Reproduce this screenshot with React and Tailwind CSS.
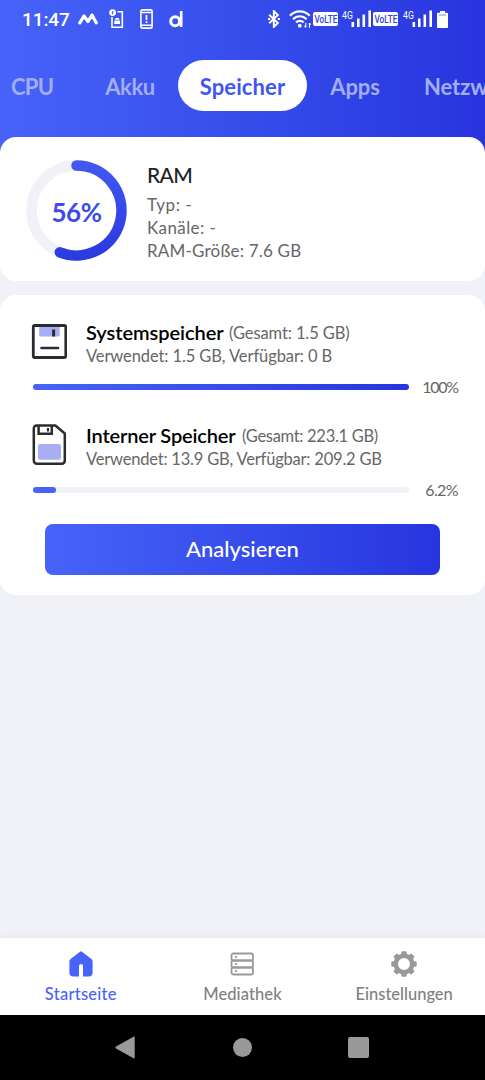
import React from "react";
import clsx from "clsx";

const VolteBadge = () => (
  <svg className="h-[14px] w-[25px]" viewBox="0 0 25 14">
    <rect width="25" height="14" rx="2" fill="#fff" />
    <text
      transform="translate(1.4 11.3) scale(0.7 1)"
      fontSize="11.8"
      fill="#3244e5"
      className="font-['Roboto',sans-serif] font-medium"
    >
      VoLTE
    </text>
  </svg>
);

const Signal = () => (
  <svg className="h-[18px] w-[30px]" viewBox="0 0 30 18" fill="#fff">
    <text
      transform="translate(0 9.3) scale(0.76 1)"
      fontSize="11.5"
      className="font-['Roboto',sans-serif]"
    >
      4G
    </text>
    <rect x="9.5" y="12" width="2.6" height="5" />
    <rect x="15" y="8.5" width="2.6" height="8.5" />
    <rect x="20.5" y="4.5" width="2.6" height="12.5" />
    <rect x="26.4" y="0.5" width="2.6" height="16.5" />
  </svg>
);

const StatusBar = () => (
  <div className="flex h-[38px] items-center pl-[22px] text-white">
    <span className="w-[56px] pt-px font-['Roboto',sans-serif] text-[19px] leading-none font-medium tracking-[-0.1px]">
      11:47
    </span>
    <svg className="h-3 w-5" viewBox="0 0 20 12" fill="none" stroke="#fff" strokeWidth="3.2" strokeLinecap="round" strokeLinejoin="round">
      <path d="M1.8 9.8 6 3l4 5.5L14 2l4.2 7.8" />
    </svg>
    <svg className="ml-[11px] h-5 w-[15px]" viewBox="0 0 15 20" fill="none" stroke="#fff" strokeWidth="1.6">
      <path d="M8.5 2.8h4.8v15.5H3V8" />
      <circle cx="3.6" cy="3.6" r="3.4" fill="#fff" stroke="none" />
      <path d="M4.2 2 3.2 5.3" stroke="#3f55f0" strokeWidth="1.1" />
      <path d="M5.3 11.6H11V15H5.3zM6.6 9h3.1l.8 1.8H5.8z" fill="#fff" stroke="none" />
    </svg>
    <svg className="ml-4 h-5 w-[13px]" viewBox="0 0 13 20" fill="none" stroke="#fff" strokeWidth="1.6">
      <rect x="0.9" y="0.9" width="11.2" height="18.2" rx="1.4" />
      <path d="M1 3.6h11M1 16.2h11" strokeWidth="1.5" />
      <path d="M6.5 6v5M6.5 12.2V14" strokeWidth="1.7" />
    </svg>
    <svg className="ml-4 h-[18px] w-[15px]" viewBox="0 0 15 18" fill="none" stroke="#fff" strokeWidth="3">
      <circle cx="6.2" cy="11.2" r="4.5" />
      <path d="M12.2 1v16" strokeWidth="2.6" />
    </svg>
    <svg className="ml-[84px] h-[18px] w-3" viewBox="0 0 12 18" fill="none" stroke="#fff" strokeWidth="1.9">
      <path d="m1.2 4.7 8.7 8.3-4.1 4V1l4.1 4-8.7 8.3" />
      <path d="M0 9h2.2M9.8 9H12" strokeWidth="2" />
    </svg>
    <svg className="ml-[9px] h-[18px] w-[23px]" viewBox="0 0 23 18" fill="none" stroke="#fff" strokeWidth="2.2">
      <path d="M.9 5.8C6.2-.2 15.4-.2 20.7 5.8M4 9.3c3.8-4.1 9.8-4.1 13.6 0M7 12.5c2.2-2.3 5.4-2.3 7.6 0" />
      <circle cx="10.8" cy="15.7" r="1.9" fill="#fff" stroke="none" />
      <path d="M16.8 12.8v4.7m-1.3-1.6 1.3 1.5M20.4 17.8v-4.7m1.3 1.6-1.3-1.5" strokeWidth="1.1" />
    </svg>
    <div className="ml-px flex items-center">
      <VolteBadge />
      <div className="ml-1"><Signal /></div>
      <div className="ml-px"><VolteBadge /></div>
      <div className="ml-[5px]"><Signal /></div>
    </div>
    <svg className="ml-1 h-[17px] w-[11px]" viewBox="0 0 11 17" fill="#fff">
      <path d="M3 0h5v1.8h2.2c.5 0 .8.3.8.8V16c0 .6-.4 1-1 1H1c-.6 0-1-.4-1-1V2.6c0-.5.3-.8.8-.8H3z" />
      <path d="M2 4h7" stroke="#6a76ef" strokeWidth="0.9" />
    </svg>
  </div>
);

const tabs = [
  { label: "CPU", style: "ml-[11px] w-[42px] tracking-[-0.7px]" },
  { label: "Akku", style: "ml-[52px] w-[50px] tracking-[-0.4px]" },
  { label: "Speicher", active: true, style: "ml-[23px] w-[129px] tracking-[0.1px]" },
  { label: "Apps", style: "ml-[23px] w-[50px] tracking-[-0.1px]" },
  { label: "Netzwerk", style: "ml-[44px] tracking-[-0.1px]" },
];

const TabBar = () => (
  <nav className="mt-[22px] flex h-[51px] overflow-hidden">
    {tabs.map((tab) => (
      <button
        key={tab.label}
        className={clsx(
          "h-[51px] shrink-0 rounded-full pt-0.5 text-center text-[22px] leading-[49px] font-bold whitespace-nowrap",
          tab.active ? "bg-white text-[#3f57f1]" : "text-[#a3adf8]",
          tab.style
        )}
      >
        {tab.label}
      </button>
    ))}
  </nav>
);

const RamCard = () => (
  <section className="flex h-36 rounded-[16px] bg-white pt-6 pl-[26px]">
    <div className="relative h-[101px] w-[101px]">
      <svg className="h-full w-full overflow-visible" viewBox="0 0 101 101" fill="none" strokeWidth="10.5">
        <defs>
          <linearGradient id="ring" gradientUnits="userSpaceOnUse" x1="50" y1="0" x2="60" y2="101">
            <stop stopColor="#4259f2" />
            <stop offset="1" stopColor="#2b38e1" />
          </linearGradient>
        </defs>
        <circle cx="50.5" cy="49.5" r="45" stroke="#f0f2f7" />
        <path d="M50.5 4.5a45 45 0 1 1-16.7 86.8" stroke="url(#ring)" strokeLinecap="round" />
      </svg>
      <span className="absolute inset-0 flex items-center justify-center pt-0.5 text-[26px] font-bold tracking-[-0.5px] text-[#3a4dec]">
        56%
      </span>
    </div>
    <div className="-mt-px ml-5 text-[17px] leading-[23px] tracking-[0.2px] text-[#666]">
      <h2 className="mb-1 text-[21px] leading-[29px] font-medium tracking-[-0.7px] text-[#222]">RAM</h2>
      <p className="tracking-[0.6px]">Typ: -</p>
      <p className="tracking-[0.4px]">Kanäle: -</p>
      <p>RAM-Größe: 7.6 GB</p>
    </div>
  </section>
);

const FloppyIcon = () => (
  <svg className="h-[42px] w-9" viewBox="0 0 36 42" fill="none">
    <path d="M8.2 5.5h20.500V15c0 1-.6 1.500-1.500 1.500H9.700c-.9 0-1.500-.5-1.500-1.500z" fill="#a9adf4" />
    <rect x="2.3" y="5.5" width="32.5" height="32" rx="1.5" stroke="#2b2c30" strokeWidth="2.8" />
    <path d="M22.6 9.5v7" stroke="#2b2c30" strokeWidth="3" />
    <path d="M10.500 28H27" stroke="#2b2c30" strokeWidth="2.6" strokeLinecap="round" />
  </svg>
);

const SdCardIcon = () => (
  <svg className="h-[42px] w-9" viewBox="0 0 36 42" fill="none" stroke="#2b2c30" strokeWidth="2.5">
    <path d="M5.8 2.500h18.500l9.500 8v27c0 2-1.200 3.200-3.200 3.200H6c-2 0-3.200-1.200-3.200-3.200V5.700c0-2 1-3.200 3-3.200z" strokeLinejoin="round" />
    <path d="M7.6 3v7.800h13.200V3" />
    <path d="M17 5v3.500" strokeWidth="2.2" />
    <rect x="7" y="21" width="23" height="15.8" rx="2" fill="#a9adf4" stroke="none" />
  </svg>
);

const storages = [
  {
    icon: FloppyIcon,
    name: "Systemspeicher",
    total: "(Gesamt: 1.5 GB)",
    usage: "Verwendet: 1.5 GB, Verfügbar: 0 B",
    percent: 100,
    label: "100%",
    nameStyle: "w-[143px] tracking-[-0.05px]",
    totalStyle: "tracking-[-0.1px]",
    usageStyle: "tracking-[-0.1px]",
    labelStyle: "tracking-[-1.2px]",
  },
  {
    icon: SdCardIcon,
    name: "Interner Speicher",
    total: "(Gesamt: 223.1 GB)",
    usage: "Verwendet: 13.9 GB, Verfügbar: 209.2 GB",
    percent: 6.2,
    label: "6.2%",
    nameStyle: "w-[156px] tracking-[-0.15px]",
    totalStyle: "tracking-[-0.3px]",
    usageStyle: "tracking-[-0.2px]",
    labelStyle: "tracking-[-0.6px]",
  },
];

const StorageItem = ({ item }) => {
  const Icon = item.icon;

  return (
    <div className="h-[103px]">
      <div className="flex">
        <Icon />
        <div className="-mt-px ml-[19px] whitespace-nowrap">
          <div className="flex h-[25px] items-center leading-6 text-[#666]">
            <h3 className={clsx("text-[20px] font-semibold text-black", item.nameStyle)}>{item.name}</h3>
            <span className={clsx("pt-0.5 text-[16.5px]", item.totalStyle)}>{item.total}</span>
          </div>
          <p className={clsx("text-[16.5px] leading-6 text-[#666]", item.usageStyle)}>{item.usage}</p>
        </div>
      </div>
      <div className="mt-[7px] flex h-6 items-center pl-0.5">
        <div className="h-1.5 w-[376px] rounded-full bg-[#f0f2f7]">
          <div
            className="h-full rounded-full bg-linear-to-r from-[#4763f9] to-[#2834de]"
            style={{
              width: `${item.percent}%`,
              backgroundSize: `${10000 / item.percent}% 100%`,
            }}
          />
        </div>
        <span className={clsx("w-[49px] text-right text-[16px] leading-6 text-[#666]", item.labelStyle)}>
          {item.label}
        </span>
      </div>
    </div>
  );
};

const HomeIcon = () => (
  <svg className="h-[26px] w-[26px]" viewBox="0 0 26 26" fill="#4763f9">
    <path d="M11.7.9c.8-.6 1.800-.6 2.600 0l9.100 7.200c.8.6 1.200 1.400 1.200 2.400v11.300c0 2.400-1.400 3.800-3.800 3.800H15V15c0-2.700-4-2.700-4 0v10.600H5.200c-2.400 0-3.800-1.400-3.800-3.800V10.500c0-1 .4-1.800 1.200-2.400z" />
  </svg>
);

const LibraryIcon = () => (
  <svg className="h-[26px] w-[26px]" viewBox="0 0 26 26" fill="none" stroke="#999" strokeWidth="1.8">
    <rect x="2.500" y="2.5" width="21.500" height="7" rx="1.8" />
    <rect x="2.500" y="9.5" width="21.500" height="7" rx="1.8" />
    <rect x="2.500" y="16.5" width="21.500" height="7" rx="1.8" />
    <path d="M6 6h1.800M6 13h1.800M6 20h1.800" />
  </svg>
);

const GearIcon = () => (
  <svg className="h-[26px] w-[26px]" viewBox="0 0 26 26">
    <circle cx="13" cy="13" r="8.2" fill="none" stroke="#999" strokeWidth="4.4" />
    {[0, 45, 90, 135, 180, 225, 270, 315].map((angle) => (
      <rect
        key={angle}
        x="10.3"
        y="0.3"
        width="5.4"
        height="5"
        rx="1.3"
        fill="#999"
        transform={`rotate(${angle} 13 13)`}
      />
    ))}
  </svg>
);

const navItems = [
  { label: "Startseite", icon: HomeIcon, active: true, style: "tracking-[0.25px]" },
  { label: "Mediathek", icon: LibraryIcon, style: "tracking-[0.1px]" },
  { label: "Einstellungen", icon: GearIcon, style: "tracking-[0px]" },
];

const BottomNav = () => (
  <nav className="grid h-[77px] grid-cols-3 bg-white shadow-[0_-1px_6px_rgba(0,0,0,0.06)]">
    {navItems.map(({ label, icon: Icon, active, style }) => (
      <button
        key={label}
        className={clsx(
          "flex flex-col items-center pt-[13px] text-[16.5px] leading-6 font-medium",
          active ? "text-[#4763f9]" : "text-[#808080]"
        )}
      >
        <Icon />
        <span className={clsx("mt-[5px]", style)}>{label}</span>
      </button>
    ))}
  </nav>
);

const SystemNav = () => (
  <div className="flex h-[65px] items-center bg-black pl-[115px]">
    <svg className="h-[23px] w-5" viewBox="0 0 20 23" fill="#999">
      <path d="M18.5.7 1 10.6c-.8.5-.8 1.300 0 1.800l17.500 9.900c.7.4 1.200.1 1.200-.6V1.300c0-.7-.5-1-1.200-.6z" />
    </svg>
    <div className="ml-[98px] h-[19px] w-[19px] rounded-full bg-[#999]" />
    <div className="ml-24 h-[21px] w-[21px] rounded-[2px] bg-[#999]" />
  </div>
);

const App = () => {
  return (
    <div className="flex h-[1080px] w-[485px] flex-col overflow-hidden bg-[#f0f2f7] font-['Lato',sans-serif]">
      {/* Header */}
      <header className="h-[157px] shrink-0 bg-linear-to-r from-[#4763f9] to-[#2834de]">
        <StatusBar />
        <TabBar />
      </header>

      <main className="-mt-5 flex flex-1 flex-col gap-3.5">
        <RamCard />

        {/* Storage */}
        <section className="h-[300px] rounded-[16px] bg-white pt-[25px] pl-[31px]">
          {storages.map((item) => (
            <StorageItem key={item.name} item={item} />
          ))}
          <button className="mt-[-2px] ml-3.5 h-[51px] w-[395px] rounded-lg bg-linear-to-r from-[#4763f9] to-[#2834de] pb-px text-[22px] leading-[48px] font-medium text-white">
            Analysieren
          </button>
        </section>
      </main>

      <BottomNav />
      <SystemNav />
    </div>
  );
};

export default App;
